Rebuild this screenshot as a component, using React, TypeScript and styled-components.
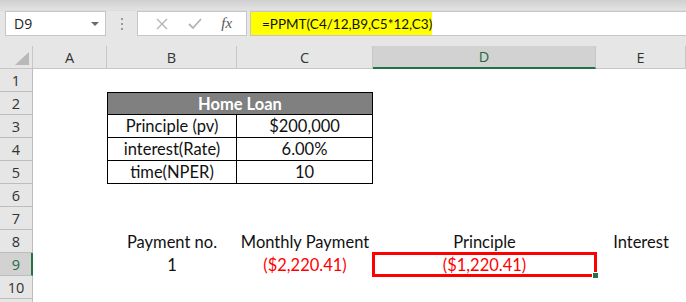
import React from "react";
import styled, { createGlobalStyle } from "styled-components";

const GlobalStyle = createGlobalStyle`
	body {
		margin: 0;
		background: #ffffff;
		font-family: Lato, "Open Sans", sans-serif;
	}
`;

const Window = styled.div`
	width: 686px;
	height: 302px;
	overflow: hidden;
	background: #e6e6e6;
`;

const TopStrip = styled.div`
	height: 10px;
	background: linear-gradient(180deg, #d0d0d0, #e2e2e2);
	border-bottom: 1px solid #dcdcdc;
`;

const FormulaRow = styled.div`
	display: flex;
	align-items: stretch;
	height: 25px;
	padding-left: 5px;
`;

const NameBox = styled.div`
	width: 101px;
	box-sizing: border-box;
	display: flex;
	align-items: center;
	justify-content: space-between;
	padding: 0 6px 0 8px;
	background: #ffffff;
	border: 1px solid #c6c6c6;
	font-family: "Open Sans", sans-serif;
	font-size: 14px;
	color: #222;
`;

const Caret = styled.span`
	width: 0;
	height: 0;
	border-left: 4px solid transparent;
	border-right: 4px solid transparent;
	border-top: 4px solid #6a6a6a;
`;

const Dots = styled.div`
	width: 31px;
	display: flex;
	flex-direction: column;
	align-items: center;
	justify-content: center;
	gap: 3px;

	span {
		width: 2px;
		height: 2px;
		background: #9a9a9a;
	}
`;

const FxBox = styled.div`
	width: 110px;
	box-sizing: border-box;
	display: flex;
	align-items: center;
	justify-content: space-around;
	padding: 0 4px 0 8px;
	background: #ffffff;
	border: 1px solid #c6c6c6;
`;

const Fx = styled.span`
	font-family: "Liberation Serif", serif;
	font-style: italic;
	font-size: 15px;
	color: #555;
`;

const FormulaInput = styled.div`
	flex: 1;
	margin-left: 3px;
	display: flex;
	background: #ffffff;
	border-top: 1px solid #c6c6c6;
	border-bottom: 1px solid #c6c6c6;
	border-left: 1px solid #c6c6c6;
`;

const Highlight = styled.div`
	width: 181px;
	box-sizing: border-box;
	background: #ffff00;
	padding-left: 11px;
	display: flex;
	align-items: center;
	font-size: 13.5px;
	color: #111;
`;

const Sheet = styled.div`
	margin-top: 10px;
	display: grid;
	grid-template-columns: 33px 74px 130px 136px 223px 90px;
	grid-auto-rows: 23px;
	background: #ffffff;
`;

const Corner = styled.div`
	position: relative;
	background: #e6e6e6;
	border-right: 1px solid #c6c6c6;
	border-bottom: 1px solid #c6c6c6;

	&::after {
		content: "";
		position: absolute;
		right: 3px;
		bottom: 3px;
		border-left: 14px solid transparent;
		border-bottom: 13px solid #b8b8b8;
	}
`;

const ColHead = styled.div<{ $active?: boolean }>`
	box-sizing: border-box;
	display: flex;
	align-items: center;
	justify-content: center;
	background: ${({ $active }) => ($active ? "#d2d2d2" : "#e6e6e6")};
	border-right: 1px solid #c6c6c6;
	border-bottom: ${({ $active }) =>
		$active ? "2px solid #217346" : "1px solid #c6c6c6"};
	font-family: "Open Sans", sans-serif;
	font-size: 14.5px;
	color: ${({ $active }) => ($active ? "#1e6b41" : "#333")};
`;

const RowHead = styled(ColHead)`
	border-bottom: 1px solid #bdbdbd;
	border-right: ${({ $active }) =>
		$active ? "2px solid #217346" : "1px solid #bdbdbd"};
	padding-left: ${({ $active }) => ($active ? "1px" : "0")};
`;

const Cell = styled.div<{
	$box?: boolean;
	$left?: boolean;
	$top?: boolean;
	$head?: boolean;
	$red?: boolean;
	$selected?: boolean;
}>`
	position: relative;
	box-sizing: border-box;
	display: flex;
	align-items: center;
	justify-content: center;
	white-space: nowrap;
	font-size: 16.5px;
	color: ${({ $red, $head }) => ($head ? "#ffffff" : $red ? "#ff0000" : "#111")};
	font-weight: ${({ $head }) => ($head ? 700 : 400)};
	background: ${({ $head }) => ($head ? "#808080" : "transparent")};
	border-right: ${({ $box }) => ($box ? "1px solid #000" : "none")};
	border-bottom: ${({ $box }) => ($box ? "1px solid #000" : "none")};
	border-left: ${({ $left }) => ($left ? "1px solid #000" : "none")};
	border-top: ${({ $top }) => ($top ? "1px solid #000" : "none")};
	${({ $selected }) =>
		$selected &&
		`
		outline: 3px solid #ff0000;
		outline-offset: -2px;
		z-index: 1;
	`}
`;

const FillHandle = styled.span`
	position: absolute;
	right: -3px;
	bottom: -3px;
	width: 5px;
	height: 5px;
	background: #217346;
	border: 1px solid #ffffff;
`;

type CellData = {
	text?: string;
	box?: boolean;
	left?: boolean;
	top?: boolean;
	head?: boolean;
	red?: boolean;
	selected?: boolean;
	span?: number;
};

const columns = ["A", "B", "C", "D", "E"];

// one array per row, cells A..E (head cell spans B:C)
const rows: CellData[][] = [
	[{}, {}, {}, {}, {}],
	[{}, { text: "Home Loan", head: true, box: true, left: true, top: true, span: 2 }, {}, {}],
	[{}, { text: "Principle (pv)", box: true, left: true }, { text: "$200,000", box: true }, {}, {}],
	[{}, { text: "interest(Rate)", box: true, left: true }, { text: "6.00%", box: true }, {}, {}],
	[{}, { text: "time(NPER)", box: true, left: true }, { text: "10", box: true }, {}, {}],
	[{}, {}, {}, {}, {}],
	[{}, {}, {}, {}, {}],
	[{}, { text: "Payment no." }, { text: "Monthly Payment" }, { text: "Principle" }, { text: "Interest" }],
	[{}, { text: "1" }, { text: "($2,220.41)", red: true }, { text: "($1,220.41)", red: true, selected: true }, {}],
	[{}, {}, {}, {}, {}],
];

const App: React.FC = () => {
	return (
		<Window>
			<GlobalStyle />
			<TopStrip />
			<FormulaRow>
				<NameBox>
					D9
					<Caret />
				</NameBox>
				<Dots>
					<span />
					<span />
					<span />
				</Dots>
				<FxBox>
					<svg width="12" height="12" viewBox="0 0 12 12">
						<path d="M1 1 L11 11 M11 1 L1 11" stroke="#b4b4b4" strokeWidth="1.4" />
					</svg>
					<svg width="14" height="12" viewBox="0 0 14 12">
						<path d="M1 6 L5 10 L13 1" stroke="#b4b4b4" strokeWidth="1.8" fill="none" />
					</svg>
					<Fx>fx</Fx>
				</FxBox>
				<FormulaInput>
					<Highlight>=PPMT(C4/12,B9,C5*12,C3)</Highlight>
				</FormulaInput>
			</FormulaRow>
			<Sheet>
				<Corner />
				{columns.map((c) => (
					<ColHead key={c} $active={c === "D"}>
						{c}
					</ColHead>
				))}
				{rows.map((row, r) => (
					<React.Fragment key={r}>
						<RowHead $active={r === 8}>{r + 1}</RowHead>
						{row.map((cell, i) => (
							<Cell
								key={i}
								style={cell.span ? { gridColumn: `span ${cell.span}` } : undefined}
								$box={cell.box}
								$left={cell.left}
								$top={cell.top}
								$head={cell.head}
								$red={cell.red}
								$selected={cell.selected}
							>
								{cell.text}
								{cell.selected && <FillHandle />}
							</Cell>
						))}
					</React.Fragment>
				))}
				{/* row 11 is only a sliver at the bottom edge */}
				<RowHead />
			</Sheet>
		</Window>
	);
};

export default App;
